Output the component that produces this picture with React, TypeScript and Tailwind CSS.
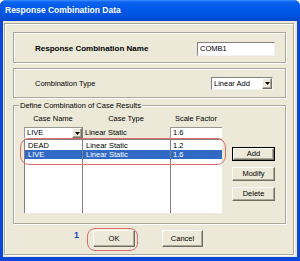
import React from "react";

const Arrow = () => (
  <svg width="5" height="3" viewBox="0 0 5 3">
    <path d="M0 0h5L2.5 3z" fill="#000" />
  </svg>
);

const btn3d =
  "flex items-center justify-center bg-[#ECE9D8] border border-t-white border-l-white border-b-[#716F64] border-r-[#716F64] shadow-[inset_-1px_-1px_0_#ACA899] text-[7.5px] leading-none";

const groupBox =
  "w-[273px] border border-[#ACA899] shadow-[inset_1px_1px_0_#fff,1px_1px_0_#fff]";

export default function App() {
  return (
    <div className="w-[300px] h-[261px] bg-white font-['Liberation_Sans',Arial,sans-serif] text-black select-none">
      <div className="w-[300px] h-[261px] flex flex-col rounded-t-[6px] bg-[#0A46D8]">
        {/* title bar */}
        <div className="h-[21px] shrink-0 flex items-center pl-[5px] rounded-t-[6px] bg-[linear-gradient(to_bottom,#3D8FFF_0px,#0E64F0_2px,#0059EA_8px,#0054E2_15px,#0046C9_21px)]">
          <span className="text-white font-bold text-[8.5px] leading-none">
            Response Combination Data
          </span>
        </div>
        {/* body */}
        <div className="flex-1 mx-[3px] mb-[4px] bg-[#ECE9D8] flex pt-[2px] pl-[1px] pr-[3px] pb-[2px]">
          <div className="flex-1 flex flex-col border border-[#ACA899] shadow-[inset_1px_1px_0_#fff,1px_1px_0_#fff] pl-[8px] pt-[8px]">
            {/* Group 1 */}
            <div className={`${groupBox} h-[31px] flex items-center justify-between pl-[21px] pr-[10px] pt-[2px]`}>
              <span className="font-bold text-[8px] leading-none">Response Combination Name</span>
              <div className="w-[78px] h-[14px] bg-white border border-t-[#808080] border-l-[#808080] border-b-[#F4F3EE] border-r-[#F4F3EE] flex items-center pl-[2px] text-[7.5px] leading-none">
                COMB1
              </div>
            </div>
            {/* Group 2 */}
            <div className={`${groupBox} mt-[5px] h-[30px] flex items-center justify-between pl-[21px] pr-[12px] pt-[1px]`}>
              <span className="text-[7.5px] leading-none">Combination Type</span>
              <div className="w-[62px] h-[13px] bg-white border border-t-[#808080] border-l-[#808080] border-b-[#F4F3EE] border-r-[#F4F3EE] flex items-stretch text-[7.5px]">
                <span className="flex-1 flex items-center pl-[2px] leading-none">Linear Add</span>
                <div className={`${btn3d} w-[10px]`}>
                  <Arrow />
                </div>
              </div>
            </div>
            {/* Group 3 */}
            <div className={`${groupBox} mt-[7px] h-[119px] flex flex-col`}>
              <span className="self-start -mt-[5px] ml-[5px] px-[1px] bg-[#ECE9D8] text-[7.5px] leading-[9px]">
                Define Combination of Case Results
              </span>
              <div className="flex mt-[4px] pl-[10px]">
                {/* table */}
                <div className="flex flex-col w-[198px]">
                  <div className="flex h-[9px] text-[7.5px] leading-[9px]">
                    <span className="w-[58px] text-center">Case Name</span>
                    <span className="w-[88px] text-center">Case Type</span>
                    <span className="w-[52px] text-center">Scale Factor</span>
                  </div>
                  <div className="flex h-[11px] mt-[4px] text-[7.5px]">
                    <div className="w-[58px] flex items-stretch bg-white border-t border-l border-[#9A9890]">
                      <span className="flex-1 flex items-center pl-[2px] leading-none">LIVE</span>
                      <div className={`${btn3d} w-[10px]`}>
                        <Arrow />
                      </div>
                    </div>
                    <div className="w-[88px] flex items-center pl-[2px] border-l border-[#808080] leading-none">
                      Linear Static
                    </div>
                    <div className="w-[52px] flex items-center pl-[2px] bg-white border-t border-l border-[#9A9890] leading-none">
                      1.6
                    </div>
                  </div>
                  <div className="relative flex h-[74px] mt-[1px] border-t border-l border-[#808080] bg-white text-[7.5px] leading-[9px]">
                    <div className="w-[57px] flex flex-col pt-[1px]">
                      <div className="h-[9px] pl-[3px]">DEAD</div>
                      <div className="h-[9px] pl-[3px] bg-[#316AC5] text-white">LIVE</div>
                    </div>
                    <div className="w-[88px] flex flex-col pt-[1px] border-l border-[#808080]">
                      <div className="h-[9px] pl-[3px]">Linear Static</div>
                      <div className="h-[9px] pl-[3px] bg-[#316AC5] text-white">Linear Static</div>
                    </div>
                    <div className="w-[52px] flex flex-col pt-[1px] border-l border-[#808080]">
                      <div className="h-[9px] pl-[2px]">1.2</div>
                      <div className="h-[9px] pl-[2px] bg-[#316AC5] text-white">1.6</div>
                    </div>
                    <div className="absolute -left-[5px] -top-[2px] w-[206px] h-[27px] rounded-[9px] border-[1.5px] border-[#E26A6A] pointer-events-none" />
                  </div>
                </div>
                {/* buttons */}
                <div className="flex flex-col ml-[10px] mt-[33px]">
                  <div className="w-[43px] h-[14px] border border-black flex">
                    <div className={`${btn3d} flex-1`}>Add</div>
                  </div>
                  <div className={`${btn3d} w-[43px] h-[14px] mt-[6px]`}>Modify</div>
                  <div className={`${btn3d} w-[43px] h-[14px] mt-[6px]`}>Delete</div>
                </div>
              </div>
            </div>
            {/* OK / Cancel */}
            <div className="flex mt-[6px] pl-[80px] gap-[27px]">
              <div className="relative">
                <div className={`${btn3d} w-[42px] h-[17px]`}>OK</div>
                <div className="absolute -left-[6px] -top-[2px] w-[51px] h-[23px] rounded-[8px] border-[1.5px] border-[#E26A6A] pointer-events-none" />
                <span className="absolute -left-[19px] top-0 text-[9px] font-bold leading-[10px] text-[#1F3FD0]">
                  1
                </span>
              </div>
              <div className={`${btn3d} w-[41px] h-[17px]`}>Cancel</div>
            </div>
          </div>
        </div>
      </div>
    </div>
  );
}
